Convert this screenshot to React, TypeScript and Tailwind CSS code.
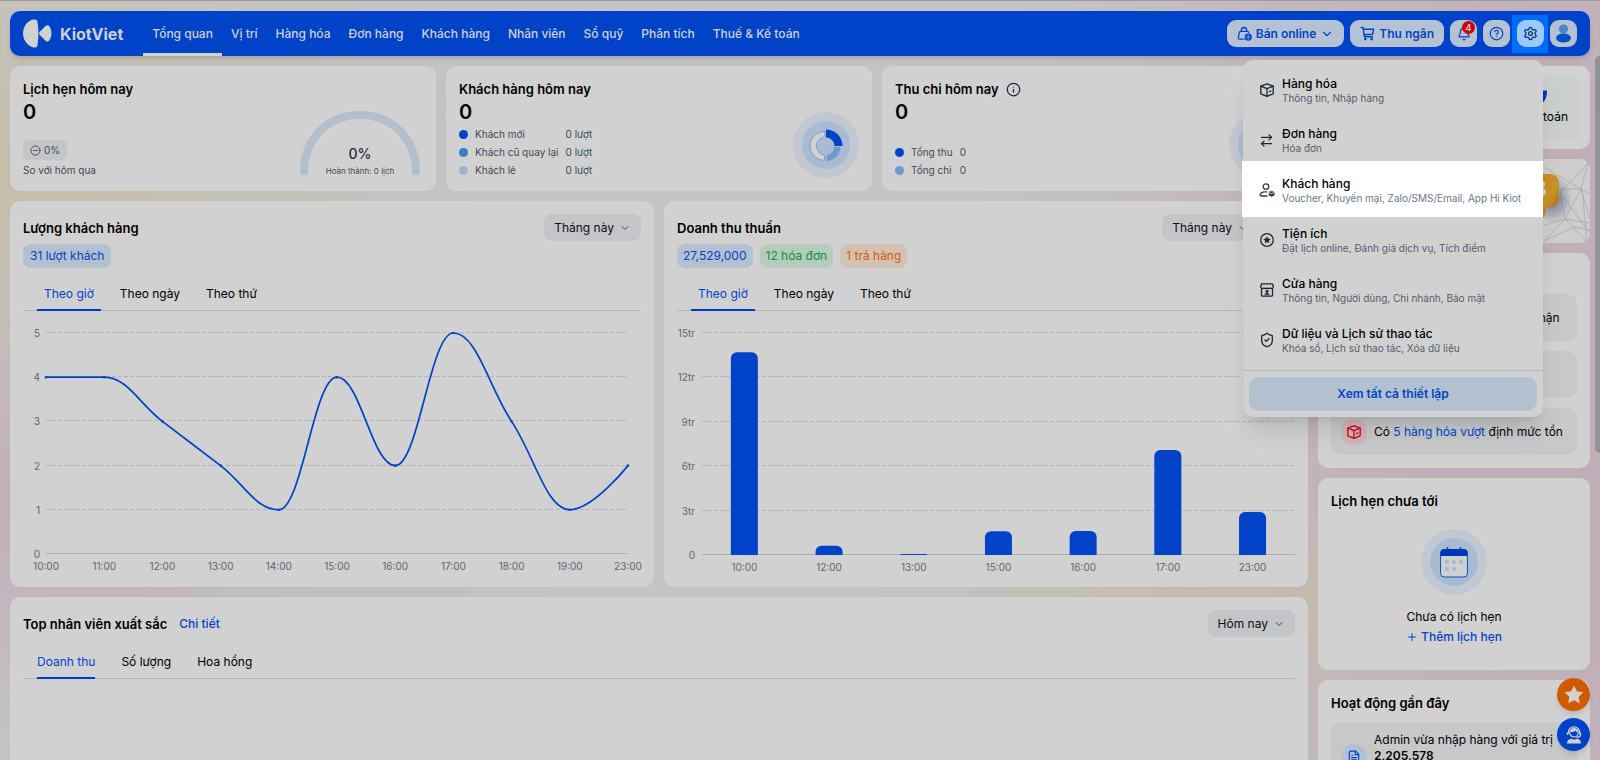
import type { ReactNode } from "react";
import {
  ArrowRightLeft,
  ChevronDown,
  CircleHelp,
  CircleMinus,
  Bell,
  FileText,
  Info,
  Plus,
  Settings,
  ShieldCheck,
} from "lucide-react";

const navItems = [
  "Tổng quan",
  "Vị trí",
  "Hàng hóa",
  "Đơn hàng",
  "Khách hàng",
  "Nhân viên",
  "Sổ quỹ",
  "Phân tích",
  "Thuế & Kế toán",
];

function BoxIcon({ size = 16 }: { size?: number }) {
  return (
    <svg width={size} height={size} viewBox="0 0 16 16" fill="none" stroke="currentColor" strokeWidth="1.3" strokeLinejoin="round" strokeLinecap="round">
      <path d="M1.8 4.2 8 1.8l6.2 2.4v7.600L8 14.400l-6.200-2.600z" />
      <path d="M1.8 4.2 8 6.6l6.2-2.4M8 6.6v7.800M10.400 9.600l1.600-.6" />
    </svg>
  );
}

function BagIcon() {
  return (
    <svg width="15" height="15" viewBox="0 0 16 16" fill="none" stroke="currentColor" strokeWidth="1.4" strokeLinecap="round" strokeLinejoin="round">
      <path d="M7.5 14H3a1.6 1.6 0 0 1-1.6-1.9l1-5A1.6 1.6 0 0 1 4 5.8h7a1.6 1.6 0 0 1 1.6 1.2" />
      <path d="M4.6 5.6V4.4a2.8 2.8 0 0 1 5.6 0v1.2" />
      <circle cx="12" cy="11.8" r="3.2" fill="currentColor" />
      <path d="M9.5 11.8h5M12 9.3v5" stroke="#b5c2d3" strokeWidth="0.6" />
    </svg>
  );
}

function CartIcon() {
  return (
    <svg width="15" height="15" viewBox="0 0 16 16" fill="none" stroke="currentColor" strokeWidth="1.5" strokeLinecap="round" strokeLinejoin="round">
      <path d="M1.2 1.6h2l1.600 9.800h8.600" />
      <path d="M3.600 3.400h11l-1.200 5.400-9 .6" />
      <circle cx="5.6" cy="13.9" r="0.7" fill="currentColor" />
      <circle cx="12.4" cy="13.9" r="0.7" fill="currentColor" />
    </svg>
  );
}

function UserCogIcon() {
  return (
    <svg width="16" height="16" viewBox="0 0 16 16" fill="none" stroke="currentColor" strokeWidth="1.3" strokeLinecap="round" strokeLinejoin="round">
      <circle cx="7" cy="4.6" r="2.8" />
      <path d="M8.2 14H2.6c-1 0-1.6-.8-1.3-1.7C2 10.600 3.600 9.800 5.600 9.800h2.200" />
      <path d="M12.600 9.200l2.600 1.200v2.800l-2.600 1.300-2.600-1.300v-2.800z" fill="currentColor" strokeWidth="0.6" />
      <path d="M10.400 10.700l2.200 1 2.200-1" stroke="#fff" strokeWidth="0.7" />
    </svg>
  );
}

function StarBadgeIcon() {
  return (
    <svg width="16" height="16" viewBox="0 0 16 16" fill="none">
      <circle cx="8" cy="8" r="6.3" stroke="currentColor" strokeWidth="1.3" />
      <path d="M8 4.2l1.150 2.400 2.600.3-1.900 1.850.46 2.600L8 10.100l-2.310 1.250.46-2.600-1.900-1.850 2.600-.3z" fill="currentColor" />
    </svg>
  );
}

function StoreIcon() {
  return (
    <svg width="16" height="16" viewBox="0 0 16 16" fill="none" stroke="currentColor" strokeWidth="1.3" strokeLinecap="round" strokeLinejoin="round">
      <path d="M2.6 1.8h10.8l1 3.2a1.9 1.9 0 0 1-3.300.9 2 2 0 0 1-3.100 0 2 2 0 0 1-3.100 0A1.900 1.900 0 0 1 1.600 5z" />
      <path d="M2.500 7v6.200c0 .6.4 1 1 1h9c.6 0 1-.4 1-1V7" />
      <circle cx="8" cy="9.3" r="1.2" fill="currentColor" strokeWidth="0.5" />
      <path d="M5.800 12.600c.2-1.200 1-1.700 2.200-1.700s2 .5 2.200 1.700z" fill="currentColor" strokeWidth="0.5" />
    </svg>
  );
}

const settings: { icon: ReactNode; title: string; description: string; active?: boolean }[] = [
  { icon: <BoxIcon />, title: "Hàng hóa", description: "Thông tin, Nhập hàng" },
  { icon: <ArrowRightLeft size={15} strokeWidth={2} />, title: "Đơn hàng", description: "Hóa đơn" },
  { icon: <UserCogIcon />, title: "Khách hàng", description: "Voucher, Khuyến mại, Zalo/SMS/Email, App Hi Kiot", active: true },
  { icon: <StarBadgeIcon />, title: "Tiện ích", description: "Đặt lịch online, Đánh giá dịch vụ, Tích điểm" },
  { icon: <StoreIcon />, title: "Cửa hàng", description: "Thông tin, Người dùng, Chi nhánh, Bảo mật" },
  { icon: <ShieldCheck size={16} strokeWidth={2} />, title: "Dữ liệu và Lịch sử thao tác", description: "Khóa sổ, Lịch sử thao tác, Xóa dữ liệu" },
];

const visitors = [
  { label: "10:00", value: 4 },
  { label: "11:00", value: 4 },
  { label: "12:00", value: 3 },
  { label: "13:00", value: 2 },
  { label: "14:00", value: 1 },
  { label: "15:00", value: 4 },
  { label: "16:00", value: 2 },
  { label: "17:00", value: 5 },
  { label: "18:00", value: 3 },
  { label: "19:00", value: 1 },
  { label: "23:00", value: 2 },
];

const revenue = [
  { label: "10:00", value: 13.7 },
  { label: "12:00", value: 0.62 },
  { label: "13:00", value: 0.06 },
  { label: "15:00", value: 1.6 },
  { label: "16:00", value: 1.62 },
  { label: "17:00", value: 7.1 },
  { label: "23:00", value: 2.9 },
];

type Point = { x: number; y: number };

// Smooth curve that never overshoots a local extreme
function splinePath(points: Point[]) {
  const s = 1.5;
  const d = s + 1;
  let path = `M${points[0].x} ${points[0].y}`;
  let prevRight = points[0];
  for (let i = 1; i < points.length; i++) {
    const prev = points[i - 1];
    const p = points[i];
    const next = points[i + 1];
    let left = p;
    let right = p;
    if (next) {
      const lx = (s * p.x + prev.x) / d;
      let ly = (s * p.y + prev.y) / d;
      const rx = (s * p.x + next.x) / d;
      let ry = (s * p.y + next.y) / d;
      const correction = ((ry - ly) * (rx - p.x)) / (rx - lx) + p.y - ry;
      ly += correction;
      ry += correction;
      if (ly > prev.y && ly > p.y) {
        ly = Math.max(prev.y, p.y);
        ry = 2 * p.y - ly;
      } else if (ly < prev.y && ly < p.y) {
        ly = Math.min(prev.y, p.y);
        ry = 2 * p.y - ly;
      }
      if (ry > next.y && ry > p.y) {
        ry = Math.max(next.y, p.y);
        ly = 2 * p.y - ry;
      } else if (ry < next.y && ry < p.y) {
        ry = Math.min(next.y, p.y);
        ly = 2 * p.y - ry;
      }
      left = { x: lx, y: ly };
      right = { x: rx, y: ry };
    }
    path += ` C${prevRight.x} ${prevRight.y} ${left.x} ${left.y} ${p.x} ${p.y}`;
    prevRight = right;
  }
  return path;
}

function LineChart() {
  const points = visitors.map((v, i) => ({ x: 23 + i * 58.2, y: 234 - v.value * 44.2 }));
  return (
    <svg viewBox="0 0 618 260" className="w-full block overflow-visible text-[10px]" role="img" aria-label="Lượng khách hàng">
      {[0, 1, 2, 3, 4, 5].map((n) => {
        const y = Math.round(234 - n * 44.2) - 0.5;
        return (
          <g key={n}>
            <line x1="23" x2="605" y1={y} y2={y} stroke={n ? "#b4b5b7" : "#adb0b3"} strokeDasharray={n ? "4 2" : undefined} />
            <text x="17" y={y + 4} textAnchor="end" fill="#5e6772">{n}</text>
          </g>
        );
      })}
      {visitors.map((v, i) => (
        <text key={v.label} x={23 + i * 58.2} y="250" textAnchor="middle" fill="#5e6772">{v.label}</text>
      ))}
      <path d={splinePath(points)} fill="none" stroke="#0043c9" strokeWidth="1.7" />
      {points.map((p) => (
        <circle key={p.x} cx={p.x} cy={p.y} r="1.3" fill="#0043c9" />
      ))}
    </svg>
  );
}

function BarChart() {
  return (
    <svg viewBox="0 0 618 260" className="w-full block overflow-visible text-[10px]" role="img" aria-label="Doanh thu thuần">
      {[0, 3, 6, 9, 12, 15].map((n) => {
        const y = Math.round(235 - n * 14.8) - 0.5;
        return (
          <g key={n}>
            <line x1="25" x2="618" y1={y} y2={y} stroke={n ? "#b4b5b7" : "#adb0b3"} strokeDasharray={n ? "4 2" : undefined} />
            <text x="18" y={y + 4} textAnchor="end" fill="#5e6772">{n ? `${n}tr` : n}</text>
          </g>
        );
      })}
      {revenue.map((r, i) => {
        const cx = 25 + (i + 0.5) * 84.7;
        const h = r.value * 14.8;
        const rad = Math.min(6, h);
        return (
          <g key={r.label}>
            <path
              d={`M${cx - 13.5} 235v${rad - h}a${rad} ${rad} 0 0 1 ${rad} ${-rad}h${27 - 2 * rad}a${rad} ${rad} 0 0 1 ${rad} ${rad}v${h - rad}z`}
              fill="#0043c9"
            />
            <text x={cx} y="251" textAnchor="middle" fill="#5e6772">{r.label}</text>
          </g>
        );
      })}
    </svg>
  );
}

function Card({ className = "", children }: { className?: string; children: ReactNode }) {
  return <section className={`rounded-[10px] bg-[#d1d1d1] px-[13px] ${className}`}>{children}</section>;
}

function Title({ children }: { children: ReactNode }) {
  return <h2 className="text-[13px] leading-5 font-semibold text-black">{children}</h2>;
}

function PeriodButton({ label }: { label: string }) {
  return (
    <button className="h-[27px] px-[10px] rounded-lg bg-[#c3c5c8] flex items-center gap-[5px] text-xs text-[#0d0f12]">
      {label}
      <ChevronDown size={12} className="text-[#3b4754]" />
    </button>
  );
}

function Tabs({ items, wide }: { items: string[]; wide?: boolean }) {
  return (
    <div role="tablist" className={`flex border-b border-[#b0b2b4] px-[14px] text-xs ${wide ? "gap-3" : "gap-[26px]"}`}>
      {items.map((item, i) => (
        <button
          key={item}
          role="tab"
          aria-selected={i === 0}
          className={`h-[34px] pt-0.5 -mb-px border-b-2 ${wide ? "px-[7px]" : ""} ${
            i === 0 ? "border-[#0036c9] text-[#0043d1]" : "border-transparent text-black"
          }`}
        >
          {item}
        </button>
      ))}
    </div>
  );
}

function Donut() {
  return (
    <svg width="66" height="66" viewBox="0 0 66 66" aria-hidden="true">
      <circle cx="33" cy="33" r="33" fill="#c1c8d1" />
      <circle cx="33" cy="33" r="24" fill="#a8bbd2" />
      <path d="M31.5 19.5a14.500 14.500 0 0 0 0 29v-5.200a9.400 9.400 0 0 1 0-18.600z" fill="#d1d1d1" stroke="#5f92d0" strokeWidth="0.7" />
      <path d="M33.500 49a14.500 14.500 0 0 0 14-14h-6a8.800 8.800 0 0 1-8 8z" fill="#6c9ad2" />
      <path d="M33 17.500a16.500 16.500 0 0 1 16.500 16.500h-8A8.500 8.500 0 0 0 33 25.500z" fill="#0043c9" />
    </svg>
  );
}

function Legend({ rows }: { rows: { color: string; label: string; value: string }[] }) {
  return (
    <dl className="grid grid-cols-[auto_auto_1fr] items-center gap-x-[7px] text-[10px] leading-[18px] text-[#3f4a57]">
      {rows.map((row) => (
        <div key={row.label} className="contents">
          <span className={`size-[9px] rounded-full ${row.color}`} />
          <dt>{row.label}</dt>
          <dd>{row.value}</dd>
        </div>
      ))}
    </dl>
  );
}

function Header() {
  return (
    <header className="h-[45px] rounded-[10px] bg-[#0043c9] shadow-md flex items-center px-[13px] text-[#d1d1d1]">
      <a href="#" className="flex items-center gap-2 mr-5">
        <svg width="29" height="29" viewBox="0 0 29 29" fill="#d1d1d1" aria-hidden="true">
          <path d="M9 .7C12 0 14 .5 14.3 2c1.600 8 1.600 17 0 25-.4 1.500-2.500 2-5.300 1C3 25.500 0 20 0 14.300S3 3 9 .7z" />
          <path d="M16.800 12.800l6-6c1-.9 2.600-.9 3.400.3 3 4.500 3 10 0 14.500-.8 1.200-2.400 1.200-3.400.3l-6-6a2.200 2.200 0 0 1 0-3.100z" />
        </svg>
        <span className="text-base font-bold">KiotViet</span>
      </a>
      <nav className="flex h-full text-xs font-medium">
        {navItems.map((item, i) => (
          <a
            key={item}
            href="#"
            className={`flex h-full items-center px-[9px] border-y-[3px] border-t-transparent ${
              i === 0 ? "border-b-[#d1d1d1]" : "border-b-transparent"
            }`}
          >
            {item}
          </a>
        ))}
      </nav>
      <div className="ml-auto flex items-center gap-[6px] text-xs font-semibold text-[#0043c9]">
        <button className="h-[27px] px-[10px] rounded-[9px] bg-[#b5c2d3] flex items-center gap-1">
          <BagIcon />
          Bán online
          <ChevronDown size={14} />
        </button>
        <button className="h-[27px] px-[10px] rounded-[9px] bg-[#b5c2d3] flex items-center gap-1">
          <CartIcon />
          Thu ngân
        </button>
        <button aria-label="Thông báo" className="relative size-[27px] rounded-[9px] bg-[#b5c2d3] flex items-center justify-center">
          <Bell size={14} />
          <span className="absolute left-3 top-px size-[13px] rounded-full bg-[#d10000] text-[#d1d1d1] text-[9px] leading-[13px] text-center">4</span>
        </button>
        <button aria-label="Trợ giúp" className="size-[27px] rounded-[9px] bg-[#b5c2d3] flex items-center justify-center">
          <CircleHelp size={15} />
        </button>
        <div className="-mx-1 h-[38px] w-9 bg-[#006dfa] flex items-center justify-center">
          <button aria-label="Thiết lập" className="size-[27px] rounded-[9px] bg-[#9cc9ff] flex items-center justify-center text-[#12305c]">
            <Settings size={15} />
          </button>
        </div>
        <button aria-label="Tài khoản" className="size-[27px] rounded-[9px] bg-[#b5c2d3] flex items-center justify-center">
          <svg width="17" height="19" viewBox="0 0 17 19">
            <circle cx="8.5" cy="5" r="4.6" fill="#4c86cb" />
            <ellipse cx="8.5" cy="14" rx="7.5" ry="4.5" fill="#0052c4" />
          </svg>
        </button>
      </div>
    </header>
  );
}

function SettingsMenu() {
  return (
    <div className="absolute right-[57px] top-[59px] z-20 w-[300px] rounded-[10px] bg-[#d1d1d1] shadow-xl">
      <ul className="py-[5px]">
        {settings.map((item) => (
          <li key={item.title}>
            <a href="#" className="relative h-[50px] flex items-center pl-[16px]">
              {item.active && <span className="absolute -top-1 -bottom-0.5 -left-px right-0 bg-white" />}
              <span className={`relative w-[23px] ${item.active ? "text-[#2c3e52]" : "text-[#1a2737]"}`}>{item.icon}</span>
              <span className="relative pt-0.5">
                <span className="block text-xs leading-[15px] font-medium text-black">{item.title}</span>
                <span className={`block text-[10px] leading-[15px] ${item.active ? "text-[#6b788b]" : "text-[#535e6d]"}`}>{item.description}</span>
              </span>
            </a>
          </li>
        ))}
      </ul>
      <div className="border-t border-[#b8b9bb] p-[6px]">
        <button className="w-full h-[34px] rounded-[10px] bg-[#b3c0cf] text-xs font-semibold text-[#0043c9]">Xem tất cả thiết lập</button>
      </div>
    </div>
  );
}

function Notice({ icon, tint, children }: { icon: ReactNode; tint: string; children: ReactNode }) {
  return (
    <div className="h-[47px] rounded-[10px] bg-[#c7c8ca] px-[10px] flex items-center gap-[7px] text-xs text-black whitespace-nowrap">
      <span className={`size-[26px] shrink-0 rounded-full flex items-center justify-center ${tint}`}>{icon}</span>
      <span>{children}</span>
    </div>
  );
}

function Sidebar() {
  return (
    <aside className="w-[272px] shrink-0 flex flex-col gap-[10px]">
      <section className="h-[83px] rounded-[10px] bg-[#d1d1d1] p-[10px]">
        <div className="h-full rounded-md bg-linear-to-l from-[#cdd0cd] to-[#c3cdc6] to-30% flex flex-col items-end justify-center gap-[7px] pr-3 text-xs text-black">
          <svg width="34" height="12" viewBox="0 0 34 12" className="mr-[21px]" aria-hidden="true">
            <path d="M24 .5h10c.2 4-1 9-3.500 11.500H24z" fill="#0a2fd0" />
          </svg>
          Thanh toán
        </div>
      </section>
      <section className="h-[84px] rounded-[10px] bg-[#cdcdcd] overflow-hidden flex justify-end">
        <svg width="66" height="84" viewBox="0 0 66 84" aria-hidden="true">
          <defs>
            <linearGradient id="gold" x1="0" y1="0" x2="1" y2="1">
              <stop offset="0" stopColor="#c48611" />
              <stop offset="0.6" stopColor="#ca9428" />
              <stop offset="1" stopColor="#945f05" />
            </linearGradient>
            <radialGradient id="glow">
              <stop offset="0" stopColor="#5c6684" stopOpacity="0.9" />
              <stop offset="1" stopColor="#5c6684" stopOpacity="0" />
            </radialGradient>
          </defs>
          <g stroke="#aaaaaa" strokeWidth="0.8" fill="none">
            <path d="M65 3 36 34M64 4 57 30M36 30l21 0L66 35M57 30l9 30M57 30 41 60M36 34l5 26M36 34l30 40M41 60l25 4M41 60 20 82M41 60l22 23M20 82l30-14 16 3M58 30l5 53M20 8l37 22M20 66l21-6" />
          </g>
          <ellipse cx="28" cy="40" rx="20" ry="24" fill="url(#glow)" />
          <path d="M6 15h20c5 0 9 3 9 8v17c0 5-3 7-8 8l-5 1c0 4-1 8-3 10L6 60z" fill="url(#gold)" />
          <path d="M8 22h10c2 0 3 1 3 3s-1 3-2 4c2 1 3 2 3 4s-2 5-5 5H8z" fill="#d1cfc8" />
        </svg>
      </section>
      <Card className="pb-[13px]">
        <div className="h-[41px] flex items-center">
          <Title>Thông báo</Title>
        </div>
        <div className="flex flex-col gap-[10px]">
          <Notice tint="bg-[#b3c0cf]" icon={<FileText size={14} className="text-[#0043c9]" />}>Có 2 lịch hẹn đang chờ xác nhận</Notice>
          <Notice tint="bg-[#b3c0cf]" icon={<FileText size={14} className="text-[#0043c9]" />}>Có hóa đơn</Notice>
          <Notice tint="bg-[#d1b5b5]" icon={<span className="text-[#d6001c]"><BoxIcon size={16} /></span>}>
            Có <a href="#" className="text-[#0043d1]">5 hàng hóa vượt</a> định mức tồn
          </Notice>
        </div>
      </Card>
      <Card className="h-[192px] pt-[13px] flex flex-col">
        <Title>Lịch hẹn chưa tới</Title>
        <div className="flex flex-col items-center pt-[18px] text-xs leading-5">
          <svg width="66" height="66" viewBox="0 0 66 66" aria-hidden="true">
            <circle cx="33" cy="33" r="33" fill="#c1c8d1" />
            <circle cx="33" cy="33" r="24" fill="#a8bbd2" />
            <rect x="19.6" y="20.5" width="26.8" height="27.5" rx="3.5" fill="#d1d1d1" stroke="#0052c9" />
            <path d="M19.5 27v-3a4 4 0 0 1 4-4h19a4 4 0 0 1 4 4v3z" fill="#0036b8" />
            <path d="M26.5 18v4M39.5 18v4" stroke="#0043c9" strokeWidth="1.4" />
            <g fill="#a8bbd2">
              <rect x="24" y="31" width="4" height="4" rx="1" />
              <rect x="31" y="31" width="4" height="4" rx="1" />
              <rect x="38" y="31" width="4" height="4" rx="1" />
              <rect x="24" y="38" width="4" height="4" rx="1" />
              <rect x="31" y="38" width="4" height="4" rx="1" />
            </g>
          </svg>
          <p className="mt-3 text-black">Chưa có lịch hẹn</p>
          <a href="#" className="flex items-center gap-[3px] font-medium text-[#0043c9]">
            <Plus size={12} />
            Thêm lịch hẹn
          </a>
        </div>
      </Card>
      <Card className="pt-[13px] pb-[13px]">
        <Title>Hoạt động gần đây</Title>
        <div className="mt-[9px] h-[70px] rounded-[10px] bg-[#c7c8ca] px-[10px] flex items-center gap-[7px] text-xs leading-4 text-black">
          <span className="size-[26px] rounded-full shrink-0 bg-[#b3c0cf] flex items-center justify-center text-[#0043c9]">
            <FileText size={14} />
          </span>
          <p className="h-[50px] whitespace-nowrap">
            Admin vừa nhập hàng với giá trị
            <br />
            <strong className="font-semibold">2,205,578</strong>
          </p>
        </div>
      </Card>
    </aside>
  );
}

export default function App() {
  return (
    <div className="relative h-screen overflow-hidden border-t border-[#9c9c9c] bg-[#c3c4c6] bg-[radial-gradient(ellipse_500px_260px_at_0px_170px,#c5bea8_0%,transparent_100%),radial-gradient(ellipse_600px_260px_at_0px_500px,#c3aeba_0%,transparent_100%),radial-gradient(ellipse_340px_130px_at_1200px_600px,#c5bda8_0%,transparent_100%),radial-gradient(ellipse_640px_900px_at_1600px_380px,#c2aeb8_30%,transparent_100%)] font-[Inter,sans-serif] antialiased">
      <div className="px-[10px] pt-[10px]">
        <Header />
        <div className="mt-[10px] flex gap-[10px]">
          <main className="min-w-0 flex-1 flex flex-col gap-[10px]">
            <div className="grid grid-cols-3 gap-[10px]">
              <Card className="h-[125px] pt-[13px] pb-[13px] flex justify-between">
                <div className="flex flex-col">
                  <Title>Lịch hẹn hôm nay</Title>
                  <p className="text-[20px] leading-[26px] font-semibold text-black">0</p>
                  <p className="mt-auto self-start h-5 px-[7px] rounded-md bg-[#c3c5c8] flex items-center gap-[3px] text-[10px] text-[#3f4a57]">
                    <CircleMinus size={11} />
                    0%
                  </p>
                  <p className="text-[10px] leading-4 mt-[2px] text-[#3f4a57]">So với hôm qua</p>
                </div>
                <div className="relative self-end mr-[3px] mb-[2px]">
                  <svg width="120" height="65" viewBox="0 0 120 65" aria-hidden="true">
                    <path d="M4 60.5C4 28 28 4 60 4s56 24 56 56.5" fill="none" stroke="#b3bfcc" strokeWidth="8" strokeLinecap="round" />
                  </svg>
                  <div className="absolute inset-x-0 -bottom-0.5 text-center">
                    <p className="text-sm leading-5 font-medium text-[#1f2e40]">0%</p>
                    <p className="text-[8px] leading-[14px] text-[#3f4a57]">Hoàn thành: 0 lịch</p>
                  </div>
                </div>
              </Card>
              <Card className="h-[125px] py-[13px] flex items-end justify-between">
                <div className="h-full flex flex-col">
                  <Title>Khách hàng hôm nay</Title>
                  <p className="text-[20px] leading-[26px] font-semibold text-black">0</p>
                  <Legend
                    rows={[
                      { color: "bg-[#0043c9]", label: "Khách mới", value: "0 lượt" },
                      { color: "bg-[#347ccc]", label: "Khách cũ quay lại", value: "0 lượt" },
                      { color: "bg-[#9db4d3]", label: "Khách lẻ", value: "0 lượt" },
                    ]}
                  />
                </div>
                <Donut />
              </Card>
              <Card className="h-[125px] py-[13px] flex items-end justify-between">
                <div className="h-full flex flex-col">
                  <div className="flex items-center gap-[7px]">
                    <Title>Thu chi hôm nay</Title>
                    <Info size={15} className="text-[#1a2737]" />
                  </div>
                  <p className="text-[20px] leading-[26px] font-semibold text-black mb-[18px]">0</p>
                  <Legend
                    rows={[
                      { color: "bg-[#0043c9]", label: "Tổng thu", value: "0" },
                      { color: "bg-[#6c9ad2]", label: "Tổng chi", value: "0" },
                    ]}
                  />
                </div>
                <Donut />
              </Card>
            </div>

            <div className="grid grid-cols-2 gap-[10px]">
              <Card className="pt-[13px] pb-[7px]">
                <div className="flex items-center justify-between">
                  <Title>Lượng khách hàng</Title>
                  <PeriodButton label="Tháng này" />
                </div>
                <div className="mt-[3px] mb-[9px] flex gap-[7px] text-xs">
                  <span className="h-6 px-[7px] rounded-lg flex items-center bg-[#b3c0cf] text-[#0043c9]">31 lượt khách</span>
                </div>
                <Tabs items={["Theo giờ", "Theo ngày", "Theo thứ"]} wide />
                <div className="pt-[9px]">
                  <LineChart />
                </div>
              </Card>
              <Card className="pt-[13px] pb-[7px]">
                <div className="flex items-center justify-between">
                  <Title>Doanh thu thuần</Title>
                  <div className="mr-9">
                    <PeriodButton label="Tháng này" />
                  </div>
                </div>
                <div className="mt-[3px] mb-[9px] flex gap-[7px] text-xs">
                  <span className="h-6 px-[6px] rounded-lg flex items-center bg-[#b3c0cf] text-[#0043c9]">27,529,000</span>
                  <span className="h-6 px-[6px] rounded-lg flex items-center bg-[#b7cbbd] text-[#009432]">12 hóa đơn</span>
                  <span className="h-6 px-[6px] rounded-lg flex items-center bg-[#d1c2b3] text-[#d65a00]">1 trả hàng</span>
                </div>
                <Tabs items={["Theo giờ", "Theo ngày", "Theo thứ"]} wide />
                <div className="pt-[9px]">
                  <BarChart />
                </div>
              </Card>
            </div>

            <Card className="pt-[13px] min-h-[300px]">
              <div className="flex items-center gap-3">
                <Title>Top nhân viên xuất sắc</Title>
                <a href="#" className="text-xs font-medium text-[#0043c9]">Chi tiết</a>
                <div className="ml-auto">
                  <PeriodButton label="Hôm nay" />
                </div>
              </div>
              <div className="mt-[8px]">
                <Tabs items={["Doanh thu", "Số lượng", "Hoa hồng"]} />
              </div>
            </Card>
          </main>
          <Sidebar />
        </div>
      </div>

      <SettingsMenu />

      <div className="absolute right-[10px] bottom-[9px] z-10 flex flex-col gap-[7px]">
        <button aria-label="Đánh giá" className="size-[33px] rounded-full bg-[#d15a00] shadow-md flex items-center justify-center">
          <svg width="20" height="20" viewBox="0 0 20 20" fill="#d1d1d1">
            <path d="M10 1.5l2.6 5.3 5.9.8-4.3 4.1 1 5.8L10 14.8l-5.2 2.7 1-5.8L1.5 7.6l5.9-.8z" stroke="#d1d1d1" strokeLinejoin="round" />
          </svg>
        </button>
        <button aria-label="Hỗ trợ" className="size-[33px] rounded-full bg-[#0043c9] shadow-md flex items-center justify-center">
          <svg width="18" height="20" viewBox="0 0 18 20" fill="none" stroke="#d1d1d1">
            <path d="M3.3 9V7.5a5.7 5.7 0 0 1 11.4 0V9" strokeWidth="1.2" />
            <circle cx="9" cy="7.8" r="4.2" strokeWidth="1.2" />
            <path d="M5.5 7c2.5.2 4-.5 4.8-1.6.7 1 1.5 1.5 2.5 1.6V5L9 3.2 5.5 5z" fill="#d1d1d1" stroke="none" />
            <path d="M2.5 7.5v2.4M15.5 7.5v2.4c0 1.5-2 2.3-4 2.3" strokeWidth="1.4" />
            <path d="M2 18.5c0-3 2-4.5 4-4.7l3 1 3-1c2 .2 4 1.7 4 4.7z" fill="#d1d1d1" stroke="none" />
          </svg>
        </button>
      </div>

      <div className="absolute right-0 top-[55px] h-[397px] w-[5px] rounded-l-full bg-[#8d9397]" />
    </div>
  );
}
